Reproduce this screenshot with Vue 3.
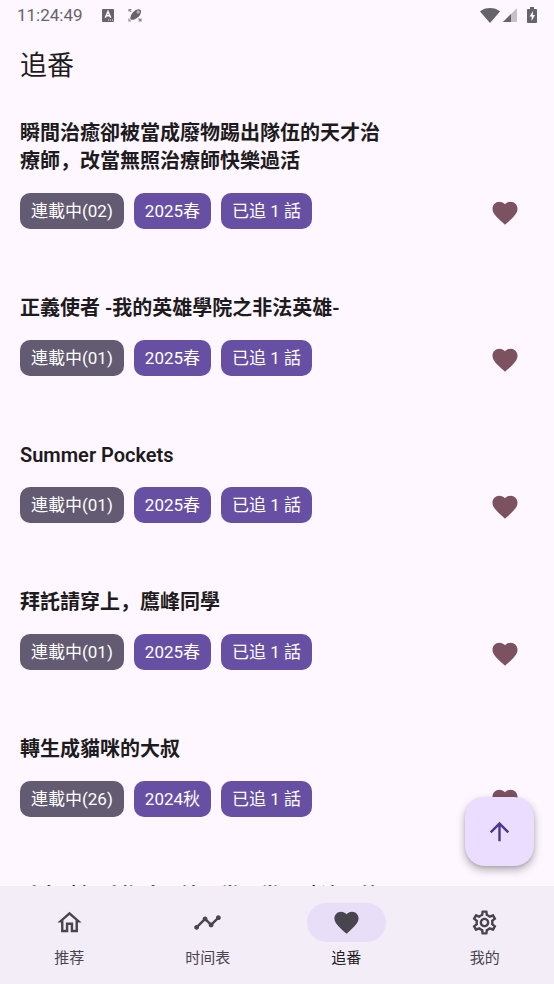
<script setup>
import { ref } from 'vue'

const shows = [
  { title: '瞬間治癒卻被當成廢物踢出隊伍的天才治療師，改當無照治療師快樂過活', tags: ['連載中(02)', '2025春', '已追 1 話'] },
  { title: '正義使者 -我的英雄學院之非法英雄-', tags: ['連載中(01)', '2025春', '已追 1 話'] },
  { title: 'Summer Pockets', tags: ['連載中(01)', '2025春', '已追 1 話'] },
  { title: '拜託請穿上，鷹峰同學', tags: ['連載中(01)', '2025春', '已追 1 話'] },
  { title: '轉生成貓咪的大叔', tags: ['連載中(26)', '2024秋', '已追 1 話'] },
  { title: '香女破記香物才是站是當是當是破注，竹', tags: [] }
]

const heart = 'M12 21.35l-1.45-1.32C5.4 15.36 2 12.28 2 8.5 2 5.42 4.42 3 7.5 3c1.74 0 3.41.81 4.5 2.09C13.09 3.81 14.76 3 16.5 3 19.58 3 22 5.42 22 8.5c0 3.78-3.4 6.86-8.55 11.54L12 21.35z'
const tabs = [
  { label: '推荐', icon: 'M12 5.69l5 4.5V18h-2v-6H9v6H7v-7.81l5-4.5M12 3L2 12h3v8h6v-6h2v6h6v-8h3L12 3z' },
  { label: '时间表', icon: 'M23 8c0 1.1-.9 2-2 2-.18 0-.35-.02-.51-.07l-3.56 3.55c.05.16.07.34.07.52 0 1.1-.9 2-2 2s-2-.9-2-2c0-.18.02-.36.07-.52l-2.55-2.55c-.16.05-.34.07-.52.07s-.36-.02-.52-.07l-4.55 4.56c.05.16.07.33.07.51 0 1.1-.9 2-2 2s-2-.9-2-2 .9-2 2-2c.18 0 .35.02.51.07l4.56-4.55C8.02 9.36 8 9.18 8 9c0-1.1.9-2 2-2s2 .9 2 2c0 .18-.02.36-.07.52l2.55 2.55c.16-.05.34-.07.52-.07s.36.02.52.07l3.55-3.56C19.02 8.35 19 8.18 19 8c0-1.1.9-2 2-2s2 .9 2 2z' },
  { label: '追番', icon: heart },
  { label: '我的', icon: 'M19.43 12.98c.04-.32.07-.64.07-.98 0-.34-.03-.66-.07-.98l2.11-1.65c.19-.15.24-.42.12-.64l-2-3.46c-.09-.16-.26-.25-.44-.25-.06 0-.12.01-.17.03l-2.49 1c-.52-.4-1.08-.73-1.69-.98l-.38-2.65C14.46 2.18 14.25 2 14 2h-4c-.25 0-.46.18-.49.42l-.38 2.65c-.61.25-1.17.59-1.69.98l-2.49-1c-.06-.02-.12-.03-.18-.03-.17 0-.34.09-.43.25l-2 3.46c-.13.22-.07.49.12.64l2.11 1.65c-.04.32-.07.65-.07.98 0 .33.03.66.07.98l-2.11 1.65c-.19.15-.24.42-.12.64l2 3.46c.09.16.26.25.44.25.06 0 .12-.01.17-.03l2.49-1c.52.4 1.08.73 1.69.98l.38 2.65c.03.24.24.42.49.42h4c.25 0 .46-.18.49-.42l.38-2.65c.61-.25 1.17-.59 1.69-.98l2.49 1c.06.02.12.03.18.03.17 0 .34-.09.43-.25l2-3.46c.12-.22.07-.49-.12-.64l-2.11-1.65zm-1.98-1.71c.04.31.05.52.05.73 0 .21-.02.43-.05.73l-.14 1.13.89.7 1.08.84-.7 1.21-1.27-.51-1.04-.42-.9.68c-.43.32-.84.56-1.25.73l-1.06.43-.16 1.13-.2 1.35h-1.4l-.19-1.35-.16-1.13-1.06-.43c-.43-.18-.83-.41-1.23-.71l-.91-.7-1.06.43-1.27.51-.7-1.21 1.08-.84.89-.7-.14-1.13c-.03-.31-.05-.54-.05-.74s.02-.43.05-.73l.14-1.13-.89-.7-1.08-.84.7-1.21 1.27.51 1.04.42.9-.68c.43-.32.84-.56 1.25-.73l1.06-.43.16-1.13.2-1.35h1.39l.19 1.35.16 1.13 1.06.43c.43.18.83.41 1.23.71l.91.7 1.06-.43 1.27-.51.7 1.21-1.07.85-.89.7.14 1.13zM12 8c-2.21 0-4 1.79-4 4s1.79 4 4 4 4-1.79 4-4-1.79-4-4-4zm0 6c-1.1 0-2-.9-2-2s.9-2 2-2 2 .9 2 2-.9 2-2 2z' }
]
const active = ref(2)
const toTop = () => window.scrollTo({ top: 0, behavior: 'smooth' })
</script>

<template>
  <div class="screen">
    <div class="status">
      <span class="clock">11:24:49</span>
      <svg class="note" width="14" height="14" viewBox="0 0 14 14" aria-hidden="true">
        <rect x="1" y="1" width="12" height="13" rx="1" fill="#67636a" />
        <path d="M4.3 9.7 7 3.5l2.7 6.2M5.3 7.7h3.4" fill="none" stroke="#fef7ff" stroke-width="1.5" />
        <path d="M7 12h1m1 0h1m1 0h1" stroke="#fef7ff" stroke-width="1" />
      </svg>
      <svg class="note" width="14" height="14" viewBox="0 0 14 14" aria-hidden="true">
        <path d="M2.600 11.600C1.600 9.500 3.500 5.500 6 3.200C8.500 1 11.500.6 12.600 2C13.700 3.600 12.500 7 10 9.300C7.500 11.500 4.500 12.300 2.600 11.600Z" fill="#67636a" />
        <circle cx="10.200" cy="4" r="1.700" fill="#b3adb5" />
        <path d="M1 3.500V1.500h2.500M1.300 1.800l2 2M1 10.500v2.500h2M10.500 13H13v-2.500M10.500 10.500l2 2" fill="none" stroke="#8b868e" stroke-width="1.200" />
      </svg>
      <div class="system">
        <svg width="20" height="16" viewBox="0 0 20 16" aria-hidden="true">
          <path d="M0 4.500C5-.1 15-.1 20 4.500L10 16Z" fill="#67636a" />
        </svg>
        <svg width="14" height="14" viewBox="0 0 14 14" aria-hidden="true">
          <path d="M14 0v14H0Z" fill="#c6c0c8" />
          <path d="M8 6v8H0Z" fill="#67636a" />
        </svg>
        <svg class="battery" width="10" height="16" viewBox="0 0 10 16" aria-hidden="true">
          <path d="M3 0h4v2h2q1 0 1 1v12q0 1-1 1H1q-1 0-1-1V3q0-1 1-1h2Z" fill="#67636a" />
          <path d="M6 4 2.500 9.500H4.600V14L8 8H5.800Z" fill="#fef7ff" />
        </svg>
      </div>
    </div>

    <h1>追番</h1>

    <main>
      <article v-for="(show, i) in shows" :key="i">
        <h2>{{ show.title }}</h2>
        <div v-if="show.tags.length" class="row">
          <ul>
            <li v-for="tag in show.tags" :key="tag">{{ tag }}</li>
          </ul>
          <button class="fav" type="button" aria-label="追番">
            <svg width="30" height="30" viewBox="0 0 24 24" aria-hidden="true"><path :d="heart" /></svg>
          </button>
        </div>
      </article>
    </main>

    <button class="fab" type="button" aria-label="↑" @click="toTop">
      <svg width="29" height="29" viewBox="0 0 24 24" aria-hidden="true">
        <path d="M4 12l1.410 1.410L11 7.830V20h2V7.830l5.580 5.590L20 12l-8-8-8 8z" />
      </svg>
    </button>

    <nav>
      <button
        v-for="(tab, i) in tabs"
        :key="tab.label"
        type="button"
        :class="{ active: active === i }"
        @click="active = i"
      >
        <span class="pill">
          <svg width="29" height="29" viewBox="0 0 24 24" aria-hidden="true"><path :d="tab.icon" /></svg>
        </span>
        <span>{{ tab.label }}</span>
      </button>
    </nav>
  </div>
</template>

<style>
body {
  background: #fef7ff;
}
</style>

<style scoped>
.screen {
  height: 100vh;
  display: flex;
  flex-direction: column;
  overflow: hidden;
  position: relative;
  background: #fef7ff;
  color: #1d1b20;
  font-family: Roboto, "Noto Sans CJK SC", sans-serif;
}
button {
  border: 0;
  padding: 0;
  background: none;
  font: inherit;
  cursor: pointer;
}
svg {
  display: block;
}
.status {
  flex: none;
  height: 30px;
  display: flex;
  align-items: center;
  padding: 0 17px;
  color: #67636a;
}
.clock {
  font-size: 17px;
  line-height: 30px;
  margin-right: 18px;
}
.note {
  margin-right: 13px;
}
.system {
  margin-left: auto;
  display: flex;
  align-items: center;
  gap: 3px;
}
.battery {
  margin-left: 7px;
}
h1 {
  flex: none;
  margin: 0;
  padding: 16px 20px 0;
  font-size: 27px;
  line-height: 40px;
  font-weight: 400;
}
main {
  flex: 1;
  min-height: 0;
  overflow: hidden;
  padding: 33px 20px 0;
  display: flex;
  flex-direction: column;
  gap: 65px;
}
article {
  flex: none;
}
h2 {
  margin: 0;
  max-width: 370px;
  font-size: 20px;
  line-height: 28px;
  font-weight: 600;
}
.row {
  height: 36px;
  margin-top: 18px;
  display: flex;
  align-items: center;
  justify-content: space-between;
}
ul {
  display: flex;
  gap: 10px;
  margin: 0;
  padding: 0;
  list-style: none;
}
li {
  padding: 0 11px;
  border-radius: 10px;
  background: #6750a4;
  color: #fff;
  font-size: 17px;
  line-height: 36px;
  white-space: nowrap;
}
li:first-child {
  background: #625b71;
}
.fav {
  padding: 4px 14px 0 0;
}
.fav svg {
  fill: #7d5260;
}
.fab {
  position: absolute;
  right: 20px;
  bottom: 118px;
  width: 69px;
  height: 69px;
  display: grid;
  place-items: center;
  border-radius: 20px;
  background: #eaddff;
  box-shadow: 0 4px 8px rgba(0, 0, 0, 0.3), 0 1px 3px rgba(0, 0, 0, 0.1);
}
.fab svg {
  fill: #4f378b;
}
nav {
  flex: none;
  height: 98px;
  display: grid;
  grid-template-columns: repeat(4, 1fr);
  background: #f3edf7;
}
nav button {
  display: flex;
  flex-direction: column;
  align-items: center;
  padding-top: 17px;
  gap: 5px;
  color: #49454f;
  font-size: 15px;
  line-height: 22px;
}
.pill {
  width: 79px;
  height: 39px;
  display: grid;
  place-items: center;
  border-radius: 20px;
}
.pill svg {
  fill: #49454f;
}
nav .active {
  color: #1d1b20;
}
.active .pill {
  background: #e8def8;
}
</style>
